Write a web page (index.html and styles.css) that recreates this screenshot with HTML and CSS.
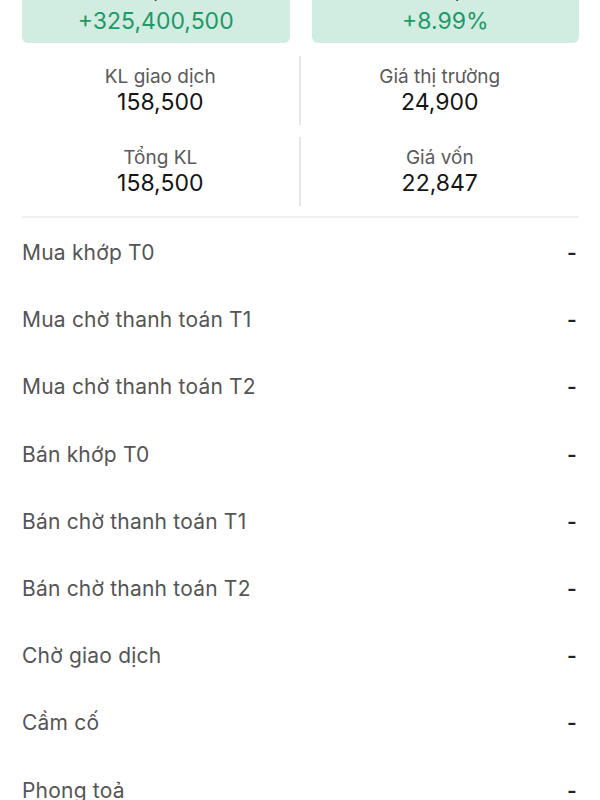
FILE: index.html
```html
<!DOCTYPE html>
<html lang="vi">

<head>
    <meta charset="UTF-8">
    <meta name="viewport" content="width=device-width, initial-scale=1.0">
    <title>Chi tiết mã</title>
    <link rel="stylesheet" href="styles.css">
</head>

<body>
    <div class="container">
        <!-- Lãi/Lỗ -->
        <div class="summary">
            <div class="summary-card">
                <div class="summary-label">Lãi/Lỗ</div>
                <div class="summary-value">+325,400,500</div>
            </div>
            <div class="summary-card">
                <div class="summary-label">% Lãi/Lỗ</div>
                <div class="summary-value">+8.99%</div>
            </div>
        </div>

        <!-- Thông tin khối lượng / giá -->
        <div class="stats">
            <div class="stat">
                <div class="stat-label">KL giao dịch</div>
                <div class="stat-value">158,500</div>
            </div>
            <div class="stat">
                <div class="stat-label">Giá thị trường</div>
                <div class="stat-value">24,900</div>
            </div>
            <div class="stat">
                <div class="stat-label">Tổng KL</div>
                <div class="stat-value">158,500</div>
            </div>
            <div class="stat">
                <div class="stat-label">Giá vốn</div>
                <div class="stat-value">22,847</div>
            </div>
        </div>

        <!-- Chi tiết -->
        <div class="detail-list">
            <div class="detail-row"><span>Mua khớp T0</span><span class="dash">-</span></div>
            <div class="detail-row"><span>Mua chờ thanh toán T1</span><span class="dash">-</span></div>
            <div class="detail-row"><span>Mua chờ thanh toán T2</span><span class="dash">-</span></div>
            <div class="detail-row"><span>Bán khớp T0</span><span class="dash">-</span></div>
            <div class="detail-row"><span>Bán chờ thanh toán T1</span><span class="dash">-</span></div>
            <div class="detail-row"><span>Bán chờ thanh toán T2</span><span class="dash">-</span></div>
            <div class="detail-row"><span>Chờ giao dịch</span><span class="dash">-</span></div>
            <div class="detail-row"><span>Cầm cố</span><span class="dash">-</span></div>
            <div class="detail-row"><span>Phong toả</span><span class="dash">-</span></div>
        </div>
    </div>
</body>

</html>
```

FILE: styles.css
```css
* {
    margin: 0;
    padding: 0;
    box-sizing: border-box;
}

body {
    font-family: 'Inter', 'Liberation Sans', sans-serif;
    background: #fff;
    color: #1a1a1a;
    overflow: hidden;
}

.container {
    padding: 0 21px 0 22px;
}

.summary {
    display: grid;
    grid-template-columns: 1fr 1fr;
    gap: 22px;
    margin-top: -23px;
}

.summary-card {
    background: #d1ece1;
    border-radius: 6px;
    text-align: center;
    padding: 5px 0;
    height: 66px;
}

.summary-label {
    font-size: 19px;
    line-height: 22px;
    color: #333;
}

.summary-value {
    font-size: 23px;
    line-height: 34px;
    color: #1e9967;
}

.stats {
    display: grid;
    grid-template-columns: 1fr 1fr;
    row-gap: 12px;
    margin-top: 13px;
    padding-bottom: 10px;
    border-bottom: 2px solid #f0f0f0;
}

.stat {
    text-align: center;
    padding: 10px 0 9px;
}

.stat:nth-child(odd) {
    border-right: 2px solid #e6e6e6;
}

.stat-label {
    font-size: 19px;
    line-height: 22px;
    color: #5a5a5a;
}

.stat-value {
    font-size: 23px;
    line-height: 28px;
    color: #151515;
}

.detail-list {
    padding-top: 1px;
}

.detail-row {
    display: flex;
    justify-content: space-between;
    align-items: center;
    height: 67.2px;
    font-size: 21px;
    letter-spacing: 0.2px;
    color: #555;
}

.dash {
    color: #222;
    font-weight: 600;
    padding-right: 2px;
}
```
